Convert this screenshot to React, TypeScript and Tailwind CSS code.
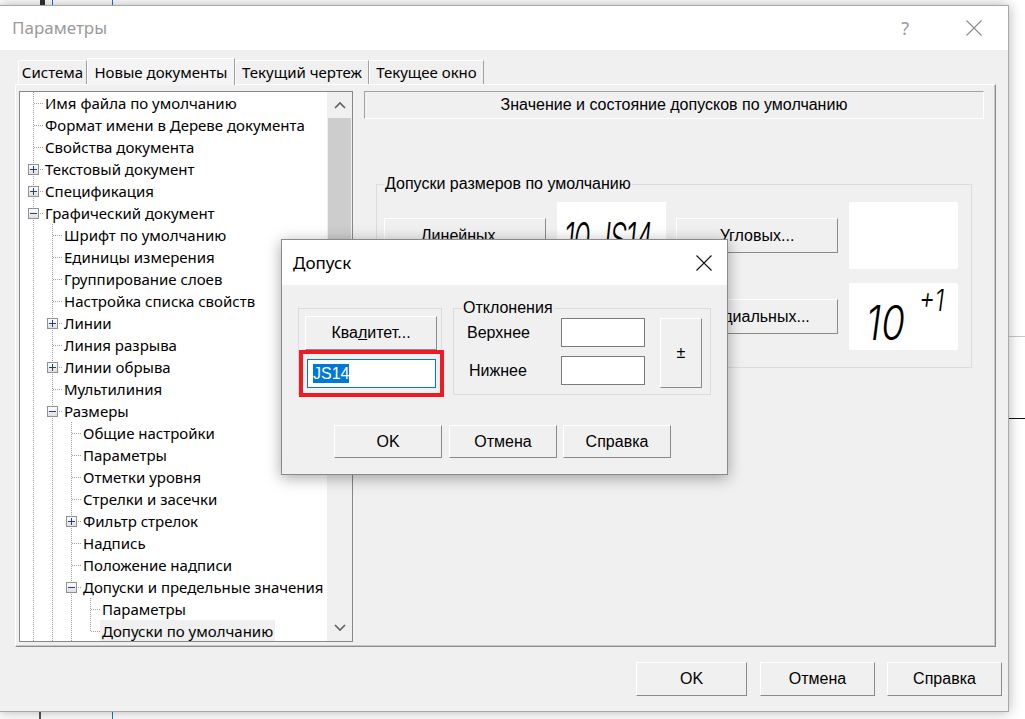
import React from "react";

type Item = { label: string; level: number; box?: "+" | "-"; selected?: boolean; last?: boolean };

const ITEMS: Item[] = [
  { label: "Имя файла по умолчанию", level: 0 },
  { label: "Формат имени в Дереве документа", level: 0 },
  { label: "Свойства документа", level: 0 },
  { label: "Текстовый документ", level: 0, box: "+" },
  { label: "Спецификация", level: 0, box: "+" },
  { label: "Графический документ", level: 0, box: "-" },
  { label: "Шрифт по умолчанию", level: 1 },
  { label: "Единицы измерения", level: 1 },
  { label: "Группирование слоев", level: 1 },
  { label: "Настройка списка свойств", level: 1 },
  { label: "Линии", level: 1, box: "+" },
  { label: "Линия разрыва", level: 1 },
  { label: "Линии обрыва", level: 1, box: "+" },
  { label: "Мультилиния", level: 1 },
  { label: "Размеры", level: 1, box: "-" },
  { label: "Общие настройки", level: 2 },
  { label: "Параметры", level: 2 },
  { label: "Отметки уровня", level: 2 },
  { label: "Стрелки и засечки", level: 2 },
  { label: "Фильтр стрелок", level: 2, box: "+" },
  { label: "Надпись", level: 2 },
  { label: "Положение надписи", level: 2 },
  { label: "Допуски и предельные значения", level: 2, box: "-" },
  { label: "Параметры", level: 3 },
  { label: "Допуски по умолчанию", level: 3, selected: true, last: true },
];

function Gutter({ level, box, last }: Item) {
  const w = 23 + 19 * level;
  const c = 13 + 19 * level;
  const cols: React.ReactNode[] = [];
  for (let i = 0; i < level; i++) {
    const x = 13 + 19 * i + 0.5;
    cols.push(<line key={i} x1={x} y1={0} x2={x} y2={22} />);
  }
  return (
    <svg width={w} height={22} className="shrink-0 block">
      <defs>
        <linearGradient id="bx" x1="0" y1="0" x2="0" y2="1">
          <stop offset="0" stopColor="#ffffff" />
          <stop offset="1" stopColor="#dedede" />
        </linearGradient>
      </defs>
      <g stroke="#a0a0a0" strokeWidth={1} strokeDasharray="1 1" fill="none">
        {cols}
        <line x1={c + 0.5} y1={0} x2={c + 0.5} y2={last ? 12 : 22} />
        <line x1={c + 1} y1={11.5} x2={w} y2={11.5} />
      </g>
      {box && (
        <g>
          <rect x={c - 5 + 0.5} y={6.5} width={10} height={10} fill="url(#bx)" stroke="#919191" />
          <rect x={c - 3} y={11} width={7} height={1} fill="#23407a" />
          {box === "+" && <rect x={c} y={8} width={1} height={7} fill="#23407a" />}
        </g>
      )}
    </svg>
  );
}

const SEG = "font-['Noto_Sans',sans-serif]";
const ARI = "font-['Liberation_Sans',Arial,sans-serif]";
const BTN =
  "flex items-center justify-center bg-[#f0f0f0] border border-[#8a8a8a] border-t-white border-l-white text-[16px] text-black " +
  ARI;

function Chevron({ up }: { up?: boolean }) {
  return (
    <svg width="12" height="8" viewBox="0 0 12 8">
      <path
        d={up ? "M1 7 L6 2 L11 7" : "M1 1 L6 6 L11 1"}
        stroke="#606060"
        strokeWidth="1.6"
        fill="none"
      />
    </svg>
  );
}

function Tree() {
  return (
    <div className="w-[334px] h-[551px] border border-[#828790] bg-white flex shrink-0">
      <div className="flex-1 overflow-hidden flex flex-col">
        {ITEMS.map((it, i) => (
          <div key={i} className="flex h-[22px] items-center shrink-0">
            <Gutter {...it} />
            <span
              className={
                "h-[22px] leading-[22px] px-[2px] whitespace-nowrap text-[15px] text-black " +
                SEG +
                (it.selected ? " bg-[#f0f0f0]" : "")
              }
            >
              {it.label}
            </span>
          </div>
        ))}
      </div>
      <div className="w-[25px] bg-[#f0f0f0] flex flex-col">
        <div className="h-[26px] flex items-center justify-center">
          <Chevron up />
        </div>
        <div className="mx-[1px] h-[290px] bg-[#cdcdcd]" />
        <div className="flex-1" />
        <div className="h-[26px] flex items-center justify-center">
          <Chevron />
        </div>
      </div>
    </div>
  );
}

function Gost({ children, size, sx }: { children: React.ReactNode; size: string; sx: string }) {
  return (
    <span
      className={
        "inline-block origin-left italic font-['Inter',sans-serif] font-light leading-none text-black whitespace-nowrap " +
        size +
        " " +
        sx
      }
    >
      {children}
    </span>
  );
}

function RightPanel() {
  return (
    <div className="flex flex-col ml-[11px]">
      <div
        className={
          "w-[620px] h-[28px] border border-[#a0a0a0] border-b-white border-r-white flex items-center justify-center text-[16px] text-black " +
          ARI
        }
      >
        Значение и состояние допусков по умолчанию
      </div>
      <fieldset className="mt-[56px] ml-[12px] w-[596px] h-[193px] border border-[#dcdcdc]">
        <legend className={"ml-[7px] px-[1px] leading-[18px] text-[16px] text-black " + ARI}>
          Допуски размеров по умолчанию
        </legend>
        <div className="pl-[7px] pt-[9px] flex flex-col gap-[14px]">
          <div className="flex items-center h-[67px]">
            <div className={BTN + " w-[162px] h-[35px]"}>Линейных...</div>
            <div className="ml-[11px] w-[109px] h-[67px] bg-white flex items-start pl-[7px] pt-[14px] overflow-hidden">
              <Gost size="text-[44px] tracking-[-2px]" sx="scale-x-[0.62]">10 JS14</Gost>
            </div>
            <div className={BTN + " ml-[10px] w-[162px] h-[35px]"}>Угловых...</div>
            <div className="ml-[11px] w-[109px] h-[67px] bg-white" />
          </div>
          <div className="flex items-center h-[67px]">
            <div className="w-[292px]" />
            <div className={BTN + " w-[162px] h-[35px]"}>Радиальных...</div>
            <div className="ml-[11px] w-[109px] h-[67px] bg-white flex items-start pl-[17px] pt-[2px]">
              <span className="mt-[14px]">
                <Gost size="text-[48px]" sx="scale-x-[0.8]">10</Gost>
              </span>
              <span className="ml-[4px]">
                <Gost size="text-[30px]" sx="scale-x-[0.8]">+1</Gost>
              </span>
            </div>
          </div>
        </div>
      </fieldset>
    </div>
  );
}

function XIcon({ color, size }: { color: string; size: number }) {
  return (
    <svg width={size} height={size} viewBox={`0 0 ${size} ${size}`}>
      <path d={`M0.5 0.5 L${size - 0.5} ${size - 0.5} M${size - 0.5} 0.5 L0.5 ${size - 0.5}`} stroke={color} strokeWidth="1.1" />
    </svg>
  );
}

function Dialog() {
  return (
    <div className="absolute left-[281px] top-[239px] w-[447px] h-[236px] border border-[#8a8a8a] bg-[#f0f0f0] shadow-[0_3px_14px_rgba(0,0,0,0.35)] flex flex-col">
      <div className="h-[45px] bg-white flex items-center justify-between pl-[11px] pr-[15px] shrink-0">
        <span className={"text-[17px] text-black " + SEG}>Допуск</span>
        <XIcon color="#111" size={16} />
      </div>
      <div className="flex items-start pl-[16px] pt-[14px] gap-[11px]">
        <div className="mt-[9px] w-[144px] h-[87px] border border-[#dcdcdc] flex flex-col pl-[6px] pt-[7px]">
          <div className={BTN + " w-[132px] h-[34px]"}>
            Ква<span className="underline">л</span>итет...
          </div>
          <div className="mt-[9px] ml-[2px] w-[129px] h-[29px] border border-[#0078d7] bg-white flex items-center pl-[5px]">
            <span className={"bg-[#0078d7] text-white text-[16px] leading-[19px] " + ARI}>JS14</span>
          </div>
        </div>
        <fieldset className="w-[258px] h-[96px] border border-[#dcdcdc]">
          <legend className={"ml-[8px] px-[1px] leading-[18px] text-[16px] text-black " + ARI}>Отклонения</legend>
          <div className="flex pl-[13px] pt-[1px]">
            <div className="flex flex-col gap-[9px]">
              <div className="flex items-center h-[29px]">
                <span className={"w-[94px] text-[16px] text-black " + ARI}>Верхнее</span>
                <div className="w-[84px] h-[29px] border border-[#7a7a7a] bg-white" />
              </div>
              <div className="flex items-center h-[29px]">
                <span className={"w-[94px] pl-[2px] text-[16px] text-black " + ARI}>Нижнее</span>
                <div className="w-[84px] h-[29px] border border-[#7a7a7a] bg-white" />
              </div>
            </div>
            <div className={BTN + " ml-[15px] w-[42px] h-[70px]"}>±</div>
          </div>
        </fieldset>
      </div>
      <div className="flex pl-[52px] mt-[30px]">
        <div className={BTN + " w-[108px] h-[33px]"}>OK</div>
        <div className={BTN + " ml-[7px] w-[108px] h-[33px]"}>Отмена</div>
        <div className={BTN + " ml-[6px] w-[108px] h-[33px]"}>Справка</div>
      </div>
      <div className="absolute left-[17px] top-[110px] w-[145px] h-[47px] border-4 border-[#ed1c24]" />
    </div>
  );
}

export default function App() {
  const tabs = [
    { t: "Система", w: "w-[69px]" },
    { t: "Новые документы", w: "w-[148px]", sel: true },
    { t: "Текущий чертеж", w: "w-[134px]" },
    { t: "Текущее окно", w: "w-[115px]" },
  ];
  return (
    <div className="relative w-[1025px] h-[719px] bg-white overflow-hidden">
      {/* background drawing lines */}
      <div className="absolute left-[40px] top-0 w-[5px] h-[5px] bg-[#333]" />
      <div className="absolute left-[52px] top-0 w-[1px] h-[5px] bg-[#1a73e8]" />
      <div className="absolute left-[112px] top-0 w-[1px] h-[5px] bg-[#1a73e8]" />
      <div className="absolute left-[39px] top-[710px] w-[2px] h-[9px] bg-[#555]" />
      <div className="absolute left-[112px] top-[710px] w-[1px] h-[9px] bg-[#1a73e8]" />
      <div className="absolute left-[1009px] top-[336px] w-[16px] h-[1px] bg-[#c8c8c8]" />
      <div className="absolute left-[1009px] top-[418px] w-[16px] h-[1px] bg-[#111]" />

      {/* main window */}
      <div className="absolute -left-[1px] top-[5px] w-[1010px] h-[707px] border border-[#a8a8a8] bg-[#f0f0f0] shadow-[0_0_12px_rgba(0,0,0,0.3)] flex flex-col">
        <div className="h-[44px] bg-white flex items-center shrink-0 pl-[12px]">
          <span className={"text-[17px] text-[#9a9a9a] " + SEG}>Параметры</span>
          <span className={"ml-auto text-[18px] text-[#9a9a9a] " + SEG}>?</span>
          <span className="ml-[57px] mr-[26px] flex">
            <XIcon color="#8a8a8a" size={16} />
          </span>
        </div>
        <div className="flex-1 flex flex-col pl-[15px] pr-[6px] pt-[8px]">
          <div className="flex items-end pl-[3px] h-[26px] relative z-10">
            {tabs.map((tb) => (
              <div
                key={tb.t}
                className={
                  "flex items-center justify-center border-t border-l border-r border-t-white border-l-white border-r-[#a0a0a0] text-[15px] text-black whitespace-nowrap " +
                  SEG +
                  " " +
                  tb.w +
                  (tb.sel ? " h-[27px] -mb-[1px] bg-[#f4f4f4]" : " h-[24px] bg-[#f0f0f0]")
                }
              >
                {tb.t}
              </div>
            ))}
          </div>
          <div className="mr-[6px] h-[563px] border border-white border-r-[#8c8c8c] border-b-[#8c8c8c] shadow-[inset_-1px_-1px_0_#c8c8c8] flex pl-[3px] pt-[6px]">
            <Tree />
            <RightPanel />
          </div>
          <div className="flex justify-end mt-[15px]">
            <div className={BTN + " w-[111px] h-[34px]"}>OK</div>
            <div className={BTN + " ml-[13px] w-[115px] h-[34px]"}>Отмена</div>
            <div className={BTN + " ml-[12px] w-[115px] h-[34px]"}>Справка</div>
          </div>
        </div>
      </div>

      <Dialog />
    </div>
  );
}
